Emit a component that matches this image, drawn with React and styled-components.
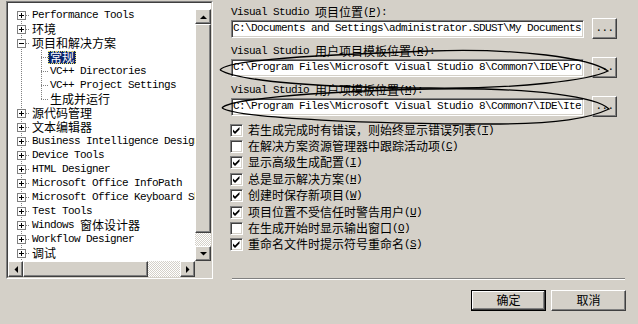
import styled, { createGlobalStyle, css } from "styled-components";

const GlobalStyle = createGlobalStyle`
  html, body {
    margin: 0;
    padding: 0;
    background: #d4d0c8;
  }
  body {
    font-family: "Liberation Mono", monospace;
    font-size: 11px;
    color: #000;
  }
`;

const CJK = /([\u2E80-\u9FFF\u3000-\u303F\uFF00-\uFFEF]+)/;

const Run = styled.span`
  display: inline-flex;
  align-items: center;
  white-space: nowrap;
`;

const Han = styled.span`
  font-family: "Noto Sans CJK SC", "Noto Sans", sans-serif;
  font-size: 12px;
  line-height: 13px;
  letter-spacing: 0;
  margin-top: -2px;
`;

const Latin = styled.span`
  font-family: "Liberation Mono", monospace;
  font-size: 11px;
  line-height: 13px;
  letter-spacing: -0.6px;
  white-space: pre;
`;

// "&X" marks the access key, drawn underlined
const Txt = ({ children }) => (
  <Run>
    {children.split(/(&.)/).map((part, i) => {
      if (part.length === 2 && part[0] === "&") {
        return (
          <Latin key={i}>
            <u>{part[1]}</u>
          </Latin>
        );
      }
      return part
        .split(CJK)
        .filter(Boolean)
        .map((s, j) =>
          CJK.test(s) ? (
            <Han key={`${i}-${j}`}>{s}</Han>
          ) : (
            <Latin key={`${i}-${j}`}>{s}</Latin>
          )
        );
    })}
  </Run>
);

const dotsV = "repeating-linear-gradient(to bottom, #808080 0 1px, transparent 1px 2px)";
const dotsH = "repeating-linear-gradient(to right, #808080 0 1px, transparent 1px 2px)";

const raised = css`
  box-sizing: border-box;
  background: #d4d0c8;
  border: 1px solid;
  border-color: #fff #404040 #404040 #fff;
  box-shadow: inset -1px -1px #808080, inset 1px 1px #d4d0c8;
`;

const Screen = styled.div`
  position: relative;
  width: 638px;
  height: 324px;
  overflow: hidden;
  display: flex;
  align-items: flex-start;
`;

/* ---------- tree ---------- */

const TreeFrame = styled.div`
  margin: 1px 0 0 6px;
  border: 1px solid;
  border-color: #808080 #fff #fff #808080;
`;

const TreeGrid = styled.div`
  display: grid;
  grid-template-columns: 187px 16px;
  grid-template-rows: 258px 16px;
  border: 1px solid;
  border-color: #404040 #d4d0c8 #d4d0c8 #404040;
  background: #fff;
`;

const TreeList = styled.div`
  overflow: hidden;
  padding-top: 5px;
  background-image: ${dotsV};
  background-repeat: no-repeat;
  background-position: 13px 12px;
  background-size: 1px 100%;
`;

const Row = styled.div`
  display: flex;
  align-items: center;
  height: 14px;
  white-space: nowrap;
  padding-left: ${(p) => (p.$level ? 33 : 9)}px;
  ${(p) =>
    p.$level === 1 &&
    css`
      background-image: ${dotsV};
      background-repeat: no-repeat;
      background-position: 33px 0;
      background-size: 1px ${p.$last ? "8px" : "100%"};
    `}
`;

const ExpanderBox = styled.svg`
  flex-shrink: 0;
  display: block;
`;

const Stub = styled.span`
  flex-shrink: 0;
  width: ${(p) => p.$w}px;
  height: 1px;
  background-image: ${dotsH};
`;

const NodeLabel = styled.span`
  flex-shrink: 0;
  display: flex;
  align-items: center;
  padding: 0 2px;
  height: 13px;
  ${(p) =>
    p.$selected &&
    css`
      background: #0a246a;
      color: #fff;
      outline: 1px dotted #e8e060;
      outline-offset: -1px;
    `}
`;

const Expander = ({ open }) => (
  <ExpanderBox width="9" height="9" viewBox="0 0 9 9">
    <rect x="0.5" y="0.5" width="8" height="8" fill="#fff" stroke="#808080" />
    <path d="M2 4.5h5" stroke="#000" />
    {!open && <path d="M4.5 2v5" stroke="#000" />}
  </ExpanderBox>
);

const VScroll = styled.div`
  display: flex;
  flex-direction: column;
  padding-top: 6px;
  background: #fff;
`;

const HScroll = styled.div`
  display: flex;
`;

const ArrowButton = styled.div`
  ${raised};
  flex-shrink: 0;
  width: ${(p) => (p.$horizontal ? 15 : 16)}px;
  height: ${(p) => (p.$horizontal ? 16 : 15)}px;
  display: grid;
  place-items: center;
`;

const Thumb = styled.div`
  ${raised};
  flex-shrink: 0;
  width: ${(p) => (p.$horizontal ? "125px" : "16px")};
  height: ${(p) => (p.$horizontal ? "16px" : "209px")};
`;

const Track = styled.div`
  flex: 1;
  background-color: #fff;
  background-image: conic-gradient(#d4d0c8 25%, #fff 0 50%, #d4d0c8 0 75%, #fff 0);
  background-size: 2px 2px;
`;

const Corner = styled.div`
  background: #d4d0c8;
`;

const arrowPoints = {
  up: "0,4 7,4 3.5,0.5",
  down: "0,0 7,0 3.5,3.5",
  left: "4,0 4,7 0.5,3.5",
  right: "0,0 0,7 3.5,3.5",
};

const Arrow = ({ dir }) => {
  const flat = dir === "up" || dir === "down";
  return (
    <svg width={flat ? 7 : 4} height={flat ? 4 : 7} viewBox={`0 0 ${flat ? 7 : 4} ${flat ? 4 : 7}`}>
      <polygon points={arrowPoints[dir]} fill="#000" />
    </svg>
  );
};

const treeItems = [
  { label: "Performance Tools" },
  { label: "环境" },
  { label: "项目和解决方案", open: true },
  { label: "常规", level: 1, selected: true },
  { label: "VC++ Directories", level: 1 },
  { label: "VC++ Project Settings", level: 1 },
  { label: "生成并运行", level: 1, last: true },
  { label: "源代码管理" },
  { label: "文本编辑器" },
  { label: "Business Intelligence Designers" },
  { label: "Device Tools" },
  { label: "HTML Designer" },
  { label: "Microsoft Office InfoPath" },
  { label: "Microsoft Office Keyboard Shortcuts" },
  { label: "Test Tools" },
  { label: "Windows 窗体设计器" },
  { label: "Workflow Designer" },
  { label: "调试" },
  { label: "数据库工具" },
];

const OptionsTree = () => (
  <TreeFrame>
    <TreeGrid>
      <TreeList>
        {treeItems.map((item) => (
          <Row key={item.label} $level={item.level || 0} $last={item.last}>
            {!item.level && <Expander open={item.open} />}
            <Stub $w={item.level ? 7 : 4} />
            <NodeLabel $selected={item.selected}>
              <Txt>{item.label}</Txt>
            </NodeLabel>
          </Row>
        ))}
      </TreeList>
      <VScroll>
        <ArrowButton>
          <Arrow dir="up" />
        </ArrowButton>
        <Thumb />
        <Track />
        <ArrowButton>
          <Arrow dir="down" />
        </ArrowButton>
      </VScroll>
      <HScroll>
        <ArrowButton $horizontal>
          <Arrow dir="left" />
        </ArrowButton>
        <Thumb $horizontal />
        <Track />
        <ArrowButton $horizontal>
          <Arrow dir="right" />
        </ArrowButton>
      </HScroll>
      <Corner />
    </TreeGrid>
  </TreeFrame>
);

/* ---------- right panel ---------- */

const Panel = styled.div`
  display: flex;
  flex-direction: column;
  width: 395px;
  margin-left: 18px;
`;

const FieldLabel = styled.div`
  margin-top: 6px;
  height: 12px;
  display: flex;
  align-items: center;
`;

const PathRow = styled.div`
  display: flex;
  align-items: center;
  gap: 8px;
  height: 21px;
`;

const PathField = styled.div`
  box-sizing: border-box;
  width: 353px;
  height: 18px;
  padding: 0 1px;
  display: flex;
  align-items: center;
  overflow: hidden;
  background: #fff;
  border: 1px solid;
  border-color: #808080 #fff #fff #808080;
  box-shadow: inset 1px 1px #404040, inset -1px -1px #d4d0c8;
`;

const BrowseButton = styled.div`
  ${raised};
  width: 25px;
  height: 21px;
  display: grid;
  place-items: center;
`;

const CheckList = styled.div`
  margin-top: 5px;
  display: flex;
  flex-direction: column;
`;

const CheckRow = styled.div`
  display: flex;
  align-items: center;
  gap: 5px;
  height: 16.4px;
  margin-left: -1px;
`;

const CheckBox = styled.span`
  box-sizing: border-box;
  flex-shrink: 0;
  width: 13px;
  height: 13px;
  background: #fff;
  border: 1px solid;
  border-color: #808080 #fff #fff #808080;
  box-shadow: inset 1px 1px #404040, inset -1px -1px #d4d0c8;
  display: grid;
  place-items: center;
`;

const Separator = styled.div`
  margin: 25px 0 0 1px;
  width: 393px;
  border-top: 1px solid #808080;
  border-bottom: 1px solid #fff;
`;

const ButtonBar = styled.div`
  display: flex;
  justify-content: flex-end;
  gap: 5px;
  margin-top: 10px;
`;

const DialogButton = styled.div`
  ${raised};
  width: 75px;
  height: 21px;
  display: grid;
  place-items: center;
  ${(p) =>
    p.$default &&
    css`
      border-color: #000;
      box-shadow: inset -1px -1px #404040, inset 1px 1px #fff, inset -2px -2px #808080;
    `}
`;

const Check = () => (
  <svg width="9" height="9" viewBox="0 0 9 9">
    <path d="M1 3.5 L3 5.5 L7.5 1 V3.5 L3 8 L1 6 Z" fill="#000" />
  </svg>
);

const paths = [
  {
    label: "Visual Studio 项目位置(&P):",
    value: "C:\\Documents and Settings\\administrator.SDUST\\My Documents",
  },
  {
    label: "Visual Studio 用户项目模板位置(&R):",
    value: "C:\\Program Files\\Microsoft Visual Studio 8\\Common7\\IDE\\Pro",
  },
  {
    label: "Visual Studio 用户项模板位置(&M):",
    value: "C:\\Program Files\\Microsoft Visual Studio 8\\Common7\\IDE\\Ite",
  },
];

const options = [
  { text: "若生成完成时有错误，则始终显示错误列表(&T)", on: true },
  { text: "在解决方案资源管理器中跟踪活动项(&C)", on: false },
  { text: "显示高级生成配置(&I)", on: true },
  { text: "总是显示解决方案(&H)", on: true },
  { text: "创建时保存新项目(&W)", on: true },
  { text: "项目位置不受信任时警告用户(&U)", on: true },
  { text: "在生成开始时显示输出窗口(&O)", on: false },
  { text: "重命名文件时提示符号重命名(&S)", on: true },
];

/* ---------- pen marks drawn over the screenshot ---------- */

const Scribble = styled.svg`
  position: absolute;
  left: 0;
  top: 0;
  pointer-events: none;
`;

const Annotations = () => (
  <Scribble width="638" height="324" viewBox="0 0 638 324">
    <g fill="none" stroke="#000" strokeWidth="1.3">
      <path d="M220,70 C226,62 280,56 430,51 C520,48 590,58 608,71 C590,80 520,89 430,88 C330,88 240,82 220,70" />
      <path d="M222,108 C228,100 300,92 430,89 C540,87 598,98 609,109 C590,118 560,124 490,124 C380,124 240,119 222,108" />
    </g>
  </Scribble>
);

const App = () => (
  <Screen>
    <GlobalStyle />
    <OptionsTree />
    <Panel>
      {paths.map((p) => (
        <div key={p.label}>
          <FieldLabel>
            <Txt>{p.label}</Txt>
          </FieldLabel>
          <PathRow>
            <PathField>
              <Latin>{p.value}</Latin>
            </PathField>
            <BrowseButton>
              <Latin>...</Latin>
            </BrowseButton>
          </PathRow>
        </div>
      ))}
      <CheckList>
        {options.map((o) => (
          <CheckRow key={o.text}>
            <CheckBox>{o.on && <Check />}</CheckBox>
            <Txt>{o.text}</Txt>
          </CheckRow>
        ))}
      </CheckList>
      <Separator />
      <ButtonBar>
        <DialogButton $default>
          <Han>确定</Han>
        </DialogButton>
        <DialogButton>
          <Han>取消</Han>
        </DialogButton>
      </ButtonBar>
    </Panel>
    <Annotations />
  </Screen>
);

export default App;
